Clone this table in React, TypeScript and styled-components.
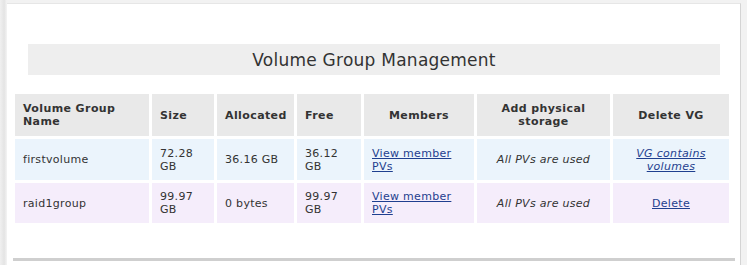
import styled, { createGlobalStyle } from "styled-components";

const GlobalStyle = createGlobalStyle`
  html, body {
    margin: 0;
    padding: 0;
    background: #f2f2f2;
  }
  body {
    font-family: "DejaVu Sans", Verdana, sans-serif;
    font-size: 11px;
    color: #333;
  }
`;

const Page = styled.div`
  display: flex;
  height: 265px;
  overflow: hidden;
`;

const Shadow = styled.div`
  width: 7px;
  background: linear-gradient(to right, #f0f0f0, #e4e4e4 60%, #f4f4f4);
`;

const Panel = styled.div`
  width: 734px;
  margin-top: 3px;
  background: #fff;
  border-right: 1px solid #d4d4d4;
  border-top: 1px solid #e6e6e6;
  padding: 0 0 0 5px;
  box-sizing: border-box;
`;

const TitleBar = styled.h2`
  margin: 40px 20px 0 16px;
  height: 31px;
  background: #eeeeee;
  font-size: 17px;
  font-weight: normal;
  letter-spacing: 0.25px;
  color: #333;
  display: flex;
  align-items: center;
  justify-content: center;
`;

const Table = styled.table`
  margin-top: 16px;
  border-collapse: separate;
  border-spacing: 3px;
  table-layout: fixed;
  width: 720px;
`;

const Th = styled.th<{ $w: number; $center?: boolean }>`
  width: ${(p) => p.$w}px;
  height: 42px;
  padding: 0 8px;
  box-sizing: border-box;
  background: #e9e9e9;
  font-size: 11px;
  font-weight: bold;
  letter-spacing: 0.4px;
  line-height: 13px;
  color: #333;
  text-align: ${(p) => (p.$center ? "center" : "left")};
  vertical-align: middle;
`;

const Tr = styled.tr<{ $tint: string }>`
  background: ${(p) => p.$tint};
`;

const Td = styled.td<{ $center?: boolean; $italic?: boolean; $h: number }>`
  height: ${(p) => p.$h}px;
  padding: 0 8px;
  box-sizing: border-box;
  line-height: 13px;
  font-size: 11px;
  letter-spacing: 0.3px;
  color: #333;
  text-align: ${(p) => (p.$center ? "center" : "left")};
  font-style: ${(p) => (p.$italic ? "italic" : "normal")};
  vertical-align: middle;
`;

const Link = styled.a<{ $italic?: boolean }>`
  color: #1f3f8f;
  text-decoration: underline;
  font-style: ${(p) => (p.$italic ? "italic" : "normal")};
  cursor: pointer;
`;

const Footer = styled.div`
  margin: 32px 0 0 1px;
  width: 722px;
  border-top: 3px solid #cfcfcf;
`;

const rows = [
  {
    name: "firstvolume",
    size: "72.28 GB",
    alloc: "36.16 GB",
    free: "36.12 GB",
    del: "VG contains volumes",
    delItalic: true,
    tint: "#ebf4fc",
    h: 41,
  },
  {
    name: "raid1group",
    size: "99.97 GB",
    alloc: "0 bytes",
    free: "99.97 GB",
    del: "Delete",
    delItalic: false,
    tint: "#f5edfb",
    h: 40,
  },
];

export default function App() {
  return (
    <Page>
      <GlobalStyle />
      <Shadow />
      <Panel>
        <TitleBar>Volume Group Management</TitleBar>
        <Table>
          <thead>
            <tr>
              <Th $w={134}>Volume Group Name</Th>
              <Th $w={62}>Size</Th>
              <Th $w={77}>Allocated</Th>
              <Th $w={64}>Free</Th>
              <Th $w={110} $center>Members</Th>
              <Th $w={133} $center>Add physical storage</Th>
              <Th $w={116} $center>Delete VG</Th>
            </tr>
          </thead>
          <tbody>
            {rows.map((r) => (
              <Tr key={r.name} $tint={r.tint}>
                <Td $h={r.h}>{r.name}</Td>
                <Td $h={r.h}>{r.size}</Td>
                <Td $h={r.h}>{r.alloc}</Td>
                <Td $h={r.h}>{r.free}</Td>
                <Td $h={r.h}>
                  <Link>View member PVs</Link>
                </Td>
                <Td $h={r.h} $center $italic>
                  All PVs are used
                </Td>
                <Td $h={r.h} $center>
                  <Link $italic={r.delItalic}>{r.del}</Link>
                </Td>
              </Tr>
            ))}
          </tbody>
        </Table>
        <Footer />
      </Panel>
    </Page>
  );
}
